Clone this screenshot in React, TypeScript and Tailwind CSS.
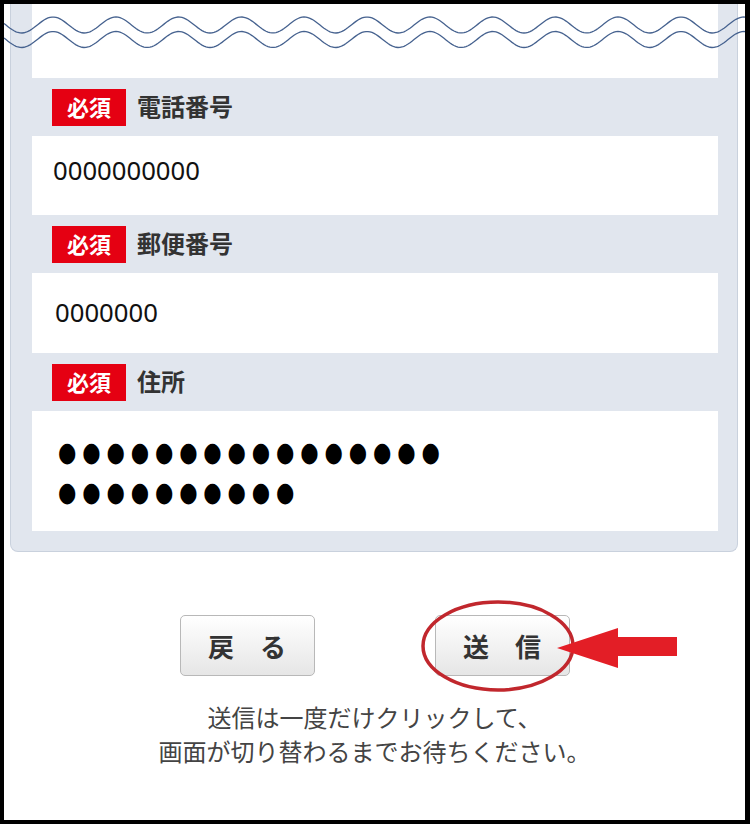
import React from 'react';

// 波線（切り取り表現）
function wavePath(y: number, amp: number, period: number, x0: number, x1: number) {
  const pts: string[] = [];
  for (let x = x0; x <= x1; x += 2) {
    const yy = y - amp * Math.cos(((x - 53) / period) * Math.PI * 2);
    pts.push(`${x},${yy.toFixed(2)}`);
  }
  return pts.join(' ');
}

function Waves() {
  return (
    <svg className="absolute -left-1 -top-1 w-[750px] h-[60px] pointer-events-none" viewBox="0 0 750 60">
      <polyline points={wavePath(25, 8, 62.8, 4, 746)} fill="none" stroke="#46628f" strokeWidth="1.3" />
      <polyline points={wavePath(39.5, 8, 62.8, 4, 746)} fill="none" stroke="#46628f" strokeWidth="1.3" />
    </svg>
  );
}

function Label({ text }: { text: string }) {
  return (
    <div className="h-[58px] flex items-center pl-[20px] gap-[11px]">
      <span className="w-[74px] h-[37px] bg-[#e50012] text-white font-bold text-[22px] flex items-center justify-center">
        必須
      </span>
      <span className="text-[#333] font-bold text-[24px]">{text}</span>
    </div>
  );
}

export default function App() {
  return (
    <div className="w-[750px] h-[824px] border-4 border-r-[5px] border-black bg-white relative overflow-hidden font-['Noto_Sans','Noto_Sans_CJK_JP',sans-serif]">
      {/* フォームパネル */}
      <div className="ml-[6px] mr-[7px] bg-[#e1e6ee] border border-t-0 border-[#c9d1dd] rounded-b-[8px] pl-[21px] pr-[19px] pb-[20px]">
        <div className="h-[74px] bg-white" />

        <Label text="電話番号" />
        <div className="h-[79px] bg-white flex items-center pl-[21px] pb-[8px] text-[25.7px] text-[#111]">0000000000</div>

        <Label text="郵便番号" />
        <div className="h-[80px] bg-white flex items-center pl-[23px] text-[25.7px] text-[#111]">0000000</div>

        <Label text="住所" />
        <div className="h-[120px] bg-white pt-[21px] pl-[26px] font-['DejaVu_Sans',sans-serif] text-[27px] leading-[40px] tracking-[7.5px] text-black">
          <div className="origin-left scale-x-[0.78]">●●●●●●●●●●●●●●●●</div>
          <div className="origin-left scale-x-[0.78]">●●●●●●●●●●</div>
        </div>
      </div>

      {/* ボタン */}
      <div className="mt-[63px] flex justify-center gap-[120px]">
        <button className="w-[135px] h-[61px] rounded-[5px] border border-[#b8b8b8] bg-gradient-to-b from-white to-[#e6e6e6] text-[#333] font-bold text-[26px] font-['Noto_Sans_CJK_JP',sans-serif]">
          戻　る
        </button>
        <button className="w-[135px] h-[61px] rounded-[5px] border border-[#b8b8b8] bg-gradient-to-b from-white to-[#e6e6e6] text-[#333] font-bold text-[26px] font-['Noto_Sans_CJK_JP',sans-serif]">
          送　信
        </button>
      </div>

      <p className="mt-[24px] text-center text-[24px] leading-[34px] text-[#444] font-['Noto_Sans_CJK_JP',sans-serif]">
        送信は一度だけクリックして、
        <br />
        画面が切り替わるまでお待ちください。
      </p>

      <Waves />

      {/* 注釈（丸と矢印） */}
      <svg className="absolute -left-1 -top-1 w-[750px] h-[824px] pointer-events-none" viewBox="0 0 750 824">
        <ellipse cx="498" cy="646" rx="75" ry="44" fill="none" stroke="#c1272d" strokeWidth="3.5" />
        <polygon points="557,648 618,628 618,637 677,637 677,656 618,656 618,668" fill="#e31e26" />
      </svg>
    </div>
  );
}
